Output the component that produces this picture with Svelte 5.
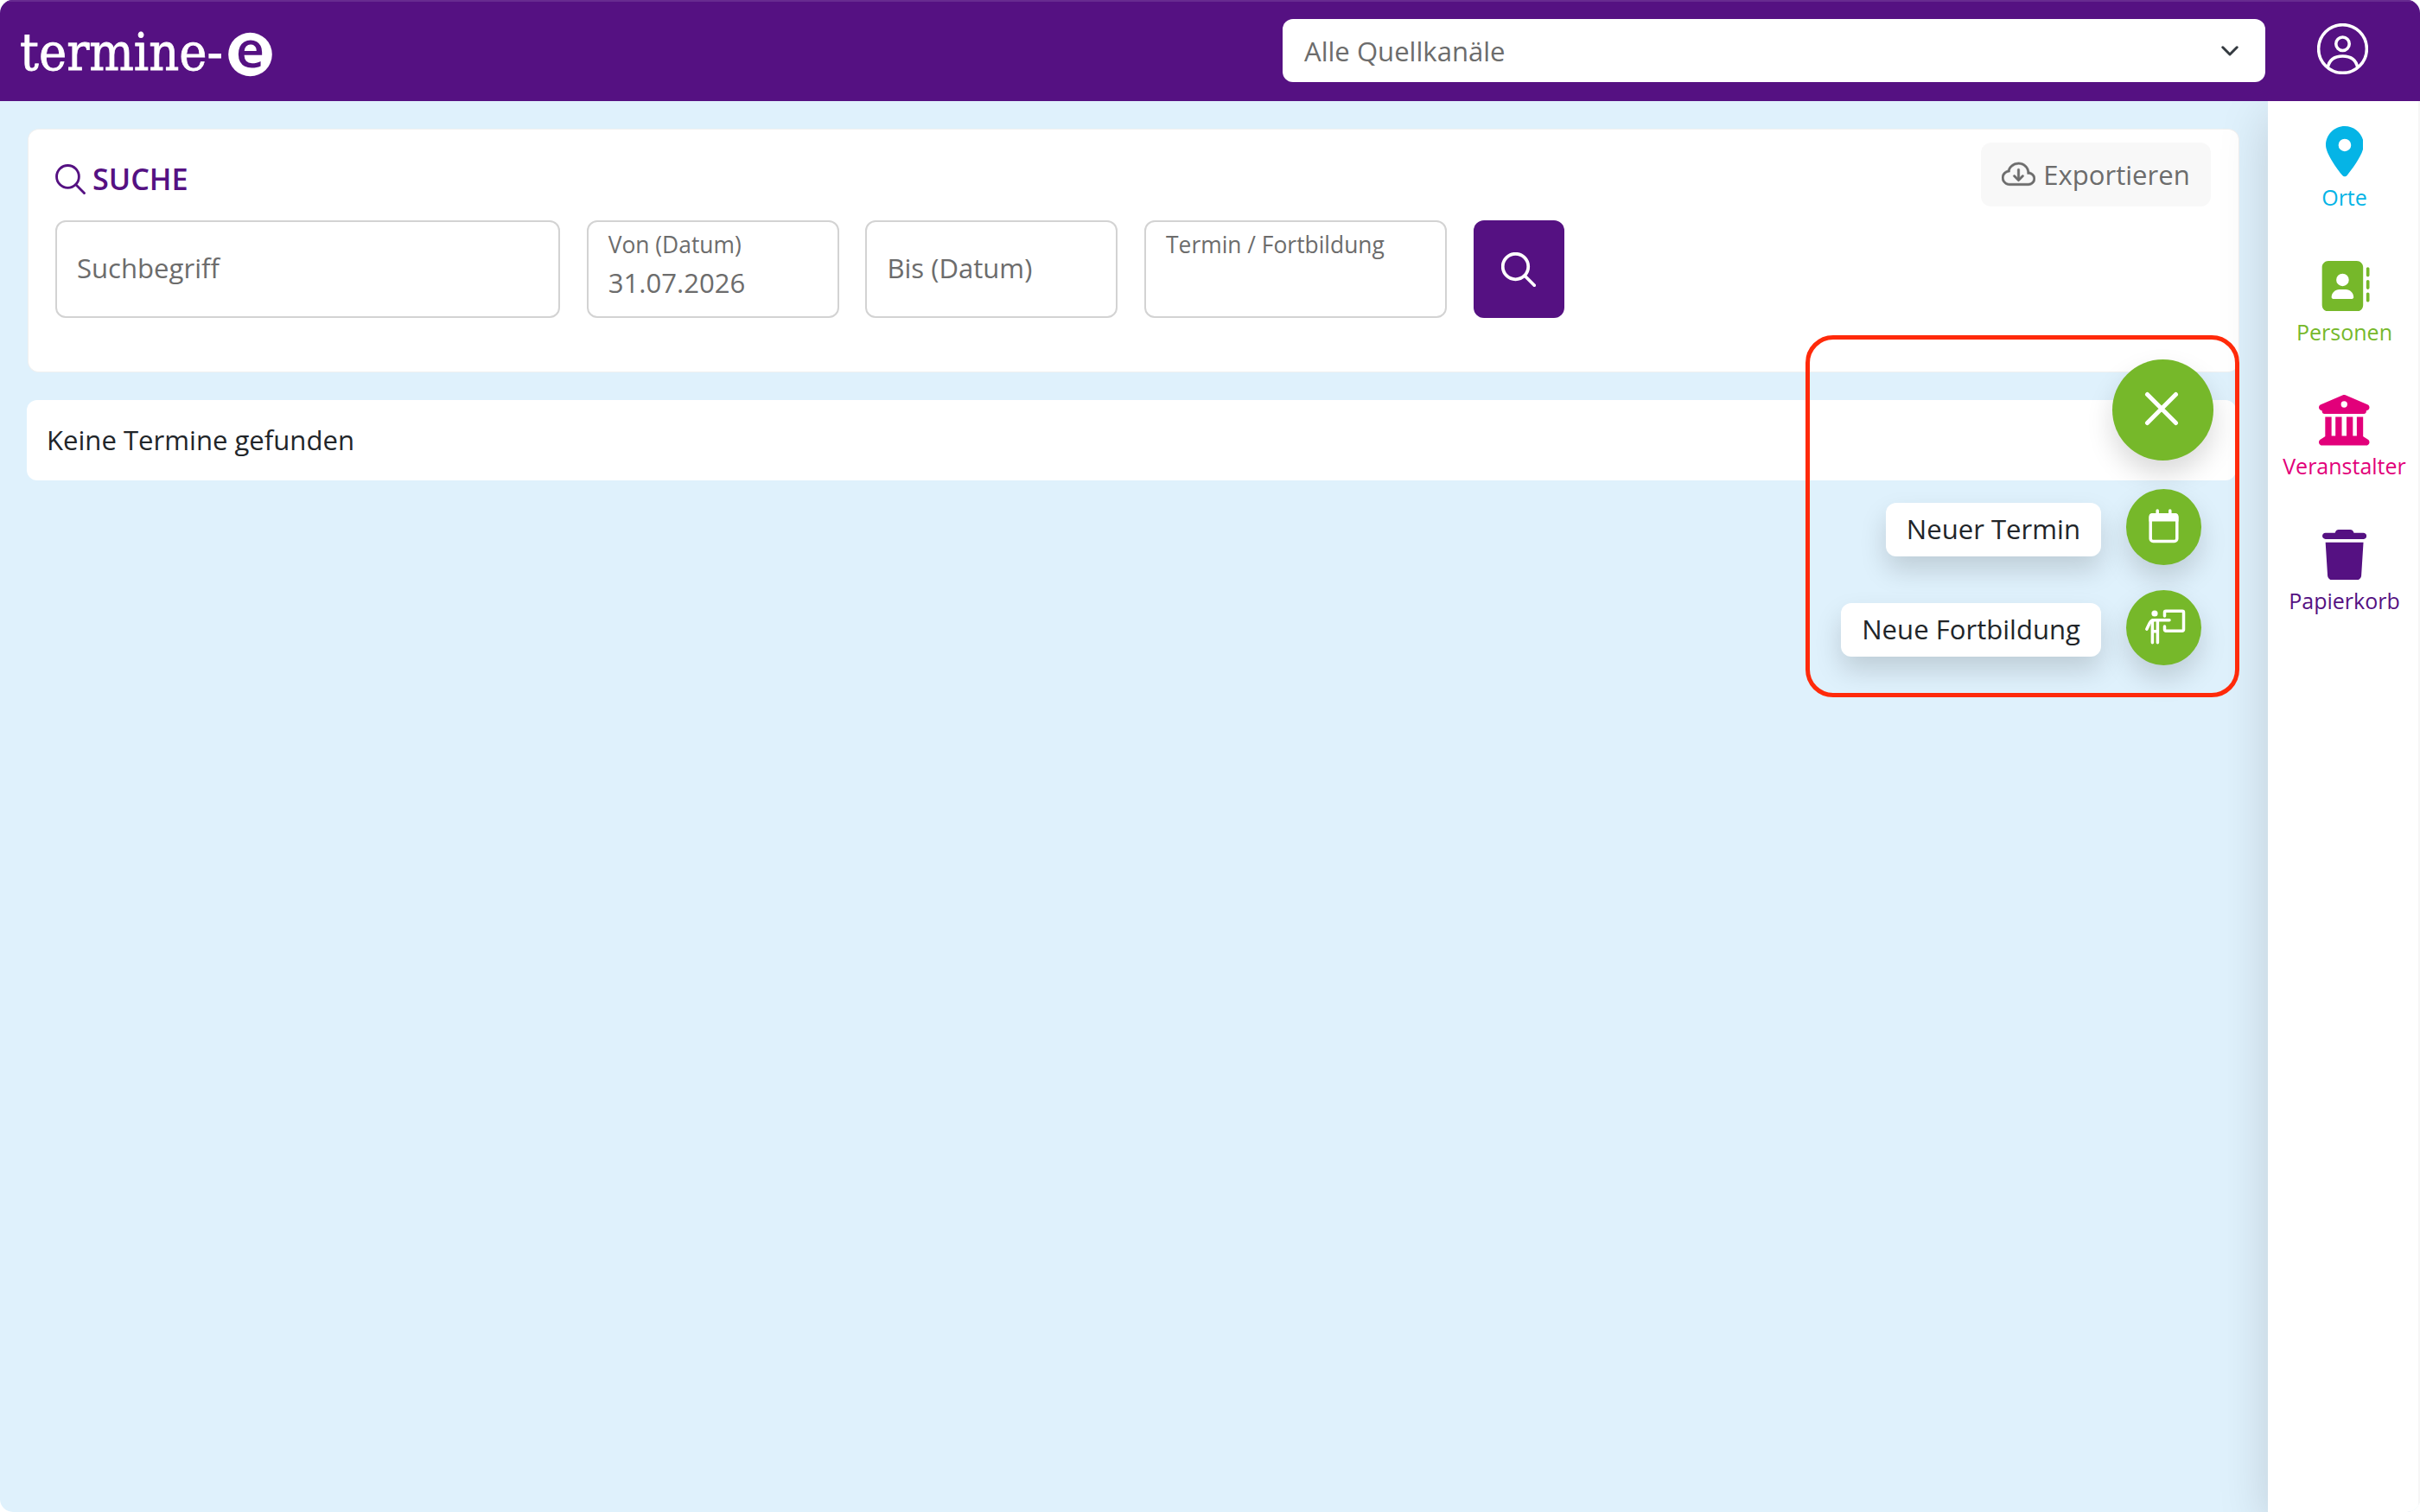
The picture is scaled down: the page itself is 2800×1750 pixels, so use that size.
<script>
	let navItems = [
		{ name: "Orte", cls: "orte", width: 384, path: "M215.7 499.2C267 435 384 279.4 384 192C384 86 298 0 192 0S0 86 0 192c0 87.4 117 243 168.3 307.2c12.3 15.3 35.1 15.3 47.4 0zM192 128a64 64 0 1 1 0 128 64 64 0 1 1 0-128z" },
		{ name: "Personen", cls: "personen", width: 512, path: "M96 0C60.7 0 32 28.7 32 64V448c0 35.3 28.7 64 64 64H384c35.3 0 64-28.7 64-64V64c0-35.3-28.7-64-64-64H96zM208 288h64c44.2 0 80 35.8 80 80c0 8.8-7.2 16-16 16H144c-8.8 0-16-7.2-16-16c0-44.2 35.8-80 80-80zm-32-96a64 64 0 1 1 128 0 64 64 0 1 1 -128 0zM512 80c0-8.8-7.2-16-16-16s-16 7.2-16 16v64c0 8.8 7.2 16 16 16s16-7.2 16-16V80zM496 192c-8.8 0-16 7.2-16 16v64c0 8.8 7.2 16 16 16s16-7.2 16-16V208c0-8.8-7.2-16-16-16zm16 144c0-8.8-7.2-16-16-16s-16 7.2-16 16v64c0 8.8 7.2 16 16 16s16-7.2 16-16V336z" },
		{ name: "Veranstalter", cls: "veranstalter", width: 512, path: "M243.4 2.6l-224 96c-14 6-21.8 21-18.7 35.8S16.8 160 32 160v8c0 13.3 10.7 24 24 24H456c13.3 0 24-10.7 24-24v-8c15.2 0 28.3-10.7 31.3-25.6s-4.8-29.9-18.7-35.8l-224-96c-8-3.4-17.2-3.4-25.2 0zM128 224H64V420.3c-.6 .3-1.2 .7-1.8 1.1l-48 32c-11.7 7.8-17 22.4-12.9 35.9S17.9 512 32 512H480c14.1 0 26.5-9.2 30.6-22.7s-1.1-28.1-12.9-35.9l-48-32c-.6-.4-1.2-.7-1.8-1.1V224H384V416H344V224H280V416H232V224H168V416H128V224zM256 64a32 32 0 1 1 0 64 32 32 0 1 1 0-64z" },
		{ name: "Papierkorb", cls: "papierkorb", width: 448, path: "M135.2 17.7L128 32H32C14.3 32 0 46.3 0 64S14.3 96 32 96H416c17.7 0 32-14.3 32-32s-14.3-32-32-32H320l-7.2-14.3C307.4 6.8 296.3 0 284.2 0H163.8c-12.1 0-23.2 6.8-28.6 17.7zM416 128H32L53.2 467c1.6 25.3 22.6 45 47.9 45H346.9c25.3 0 46.3-19.7 47.9-45L416 128z" }
	];

	let fields = [
		{ label: "Suchbegriff", value: "", floating: false, cls: "wide" },
		{ label: "Von (Datum)", value: "31.07.2026", floating: true, cls: "date" },
		{ label: "Bis (Datum)", value: "", floating: false, cls: "date" },
		{ label: "Termin / Fortbildung", value: "", floating: true, cls: "type" }
	];

	let menuOpen = true;

	function toggleMenu() {
		menuOpen = !menuOpen;
	}
</script>

<svelte:head>
	<title>termine-e</title>
</svelte:head>

{#snippet searchIcon()}
	<svg class="search-icon" viewBox="0 0 16 16">
		<circle cx="6.6" cy="6.6" r="5.9" />
		<path d="M10.9 10.900l4.400 4.400" />
	</svg>
{/snippet}

<div id="page">
	<header>
		<svg class="logo" viewBox="0 0 320 117">
			<text class="logo-text" x="23" y="81" textLength="235" lengthAdjust="spacingAndGlyphs">termine-</text>
			<circle cx="289.5" cy="63" r="25.3" fill="#fff" />
			<text class="logo-e" x="289.5" y="77.5" text-anchor="middle">e</text>
		</svg>

		<div class="header-right">
			<button class="channel">
				<span>Alle Quellkanäle</span>
				<svg class="chevron" viewBox="0 0 20 12"><path d="M1.8 1.8l8.2 8.2 8.2-8.2" /></svg>
			</button>
			<button class="user" aria-label="Benutzer">
				<svg viewBox="0 0 58 58">
					<circle cx="29" cy="29" r="27.4" />
					<circle cx="29" cy="23.3" r="7.6" />
					<path d="M12 50.5C13.5 42 19 37.3 29 37.3S44.5 42 46 50.5" />
				</svg>
			</button>
		</div>
	</header>

	<div id="body">
		<main>
			<section class="card search">
				<div class="search-head">
					<h2>{@render searchIcon()}SUCHE</h2>
					<button class="export">
						<svg viewBox="0 0 16 16" fill="currentColor">
							<path d="M7.646 10.854a.5.5 0 0 0 .708 0l2-2a.5.5 0 0 0-.708-.708L8.5 9.293V5.5a.5.5 0 0 0-1 0v3.793L6.354 8.146a.5.5 0 1 0-.708.708z" />
							<path d="M4.406 3.342A5.53 5.53 0 0 1 8 2c2.69 0 4.923 2 5.166 4.579C14.758 6.804 16 8.137 16 9.773 16 11.569 14.502 13 12.687 13H3.781C1.708 13 0 11.366 0 9.318c0-1.763 1.266-3.223 2.942-3.593.143-.863.698-1.723 1.464-2.383m.653.757c-.757.653-1.153 1.44-1.153 2.056v.448l-.445.049C2.064 6.805 1 7.952 1 9.318 1 10.785 2.23 12 3.781 12h8.906C13.98 12 15 10.988 15 9.773c0-1.216-1.02-2.228-2.313-2.228h-.5v-.5C12.188 4.825 10.328 3 8 3a4.53 4.53 0 0 0-2.941 1.1z" />
						</svg>
						Exportieren
					</button>
				</div>

				<div class="fields">
					{#each fields as field}
						<div class="field {field.cls}" class:floating={field.floating}>
							<div class="label">{field.label}</div>
							{#if field.value}
								<div class="value">{field.value}</div>
							{/if}
						</div>
					{/each}
					<button class="submit" aria-label="Suchen">{@render searchIcon()}</button>
				</div>
			</section>

			<section class="card result">Keine Termine gefunden</section>
		</main>

		<nav>
			{#each navItems as item}
				<div class="nav-item {item.cls}">
					<svg viewBox="0 0 {item.width} 512" fill="currentColor"><path d={item.path} /></svg>
					<span>{item.name}</span>
				</div>
			{/each}
		</nav>
	</div>

	<!-- floating action menu -->
	<div class="fab-menu">
		<button class="fab main-fab" aria-label="Menü" on:click={toggleMenu}>
			<svg viewBox="0 0 40 40"><path d="M3.5 3.5l33 33M36.5 3.5l-33 33" /></svg>
		</button>
		{#if menuOpen}
			<div class="fab-row">
				<span class="fab-label">Neuer Termin</span>
				<button class="fab small" aria-label="Neuer Termin">
					<svg viewBox="0 0 46 46">
						<rect x="8.2" y="8.7" width="30.6" height="30.8" rx="3" />
						<path class="solid" d="M6.5 11a4 4 0 0 1 4-4h26a4 4 0 0 1 4 4v5.500H6.500z" />
						<path d="M16.2 4v5M30.800 4v5" />
					</svg>
				</button>
			</div>
			<div class="fab-row">
				<span class="fab-label">Neue Fortbildung</span>
				<button class="fab small" aria-label="Neue Fortbildung">
					<svg viewBox="0 0 46 46">
						<circle class="solid" cx="13" cy="7" r="3.6" />
						<path d="M24.5 10V5.800a1.500 1.500 0 0 1 1.500-1.500h19a1.500 1.500 0 0 1 1.500 1.500v20a1.500 1.500 0 0 1-1.500 1.500H26a1.500 1.500 0 0 1-1.500-1.500V22" />
						<path d="M30 14.800H13.500c-4 0-5 .8-6.500 3.700l-3.200 6.700" />
						<path d="M10.400 15v25.800M16.400 15v25.800M10.400 27.800h6" />
					</svg>
				</button>
			</div>
		{/if}
	</div>

	<div class="highlight"></div>
</div>

<style>
	:global(body) {
		background: #fff;
	}

	#page {
		position: relative;
		display: flex;
		flex-direction: column;
		width: 2800px;
		height: 1750px;
		overflow: hidden;
		border-radius: 15px;
		background: #dff1fc;
		color: #212529;
		font-family: "Open Sans", "Noto Sans", sans-serif;
		font-size: 31.1px;
		line-height: 46px;
	}

	button {
		display: flex;
		align-items: center;
		justify-content: center;
		box-sizing: border-box;
		margin: 0;
		padding: 0;
		border: none;
		background: none;
		color: inherit;
		font: inherit;
	}

	header {
		display: flex;
		justify-content: space-between;
		flex: none;
		height: 117px;
		box-sizing: border-box;
		background: #551182;
		box-shadow: inset 0 2px #672b90;
		z-index: 1;
	}

	.logo {
		flex: none;
		width: 320px;
		height: 117px;
	}

	.logo-text {
		font-family: "DejaVu Serif", serif;
		font-size: 59px;
		fill: #fff;
		stroke: #fff;
		stroke-width: 0.8;
	}

	.logo-e {
		font-family: "Open Sans", sans-serif;
		font-size: 57px;
		font-weight: 600;
		fill: #551182;
	}

	.header-right {
		display: flex;
		align-items: flex-start;
		padding-right: 60px;
	}

	.channel {
		justify-content: space-between;
		width: 1137px;
		height: 73px;
		margin: 22px 60px 0 0;
		padding: 0 31px 0 25px;
		border-radius: 12px;
		background: #fff;
		color: #6c6c6c;
	}

	.chevron {
		width: 20px;
		height: 12px;
		fill: none;
		stroke: #343a40;
		stroke-width: 3;
		stroke-linecap: round;
		stroke-linejoin: round;
	}

	.user {
		margin-top: 27px;
	}

	.user svg {
		width: 59px;
		height: 59px;
		fill: none;
		stroke: #fff;
		stroke-width: 3.5;
	}

	#body {
		display: flex;
		flex: 1;
	}

	main {
		flex: 1;
		display: flex;
		flex-direction: column;
		gap: 33px;
		padding: 33px 34px 0 31px;
	}

	.card {
		box-sizing: border-box;
		border-radius: 12px;
		background: #fff;
	}

	.search {
		height: 280px;
		margin: 0 0 0 2px;
		padding: 15px 32px 0 31px;
		box-shadow: 0 0 0 1px #f0f0f0;
	}

	.search-head {
		display: flex;
		justify-content: space-between;
		height: 90px;
	}

	h2 {
		display: flex;
		align-items: center;
		gap: 8px;
		height: 48px;
		margin: 18px 0 0;
		font-size: 34.2px;
		font-weight: 600;
		color: #551182;
	}

	.search-icon {
		fill: none;
		stroke: currentColor;
		stroke-linecap: round;
	}

	h2 .search-icon {
		width: 35px;
		height: 35px;
		stroke-width: 1.3;
	}

	.export {
		gap: 9px;
		width: 266px;
		height: 74px;
		border-radius: 12px;
		background: #f8f8f8;
		color: #6c6c6c;
	}

	.export svg {
		width: 39px;
		height: 39px;
		stroke: currentColor;
		stroke-width: 0.2;
	}

	.fields {
		display: flex;
		gap: 30.7px;
		height: 113px;
	}

	.field {
		display: flex;
		flex-direction: column;
		justify-content: center;
		box-sizing: border-box;
		padding: 0 23px 3px;
		border: 2px solid #d3d3d3;
		border-radius: 12px;
		color: #6c6c6c;
	}

	.wide {
		width: 584px;
	}

	.date {
		width: 292px;
	}

	.type {
		width: 350px;
	}

	.floating {
		justify-content: flex-start;
		padding-top: 3px;
	}

	.floating .label {
		font-size: 26.4px;
		height: 46px;
	}

	.floating .value {
		line-height: 43px;
	}

	.submit {
		width: 105px;
		border-radius: 12px;
		background: #551182;
		color: #fff;
	}

	.submit .search-icon {
		width: 40px;
		height: 40px;
		stroke-width: 1.5;
	}

	.result {
		height: 93px;
		margin-right: 3px;
		padding: 23px;
	}

	nav {
		display: flex;
		flex-direction: column;
		flex: none;
		width: 176px;
		box-sizing: border-box;
		padding-top: 29px;
		background: #fff;
		box-shadow: 0 16px 58px rgba(0, 0, 0, 0.15), inset -2px 0 #f6f6f6;
	}

	.nav-item {
		display: flex;
		flex-direction: column;
		align-items: center;
		height: 155.6px;
		padding-left: 1px;
		font-size: 25px;
		line-height: 34px;
	}

	.nav-item svg {
		height: 58.5px;
		margin-bottom: 6.500px;
	}

	.orte {
		color: #05b4e6;
	}

	.personen {
		color: #76b82a;
	}

	.veranstalter {
		color: #e2007a;
	}

	.papierkorb {
		color: #551182;
	}

	.fab-menu {
		position: absolute;
		top: 416px;
		right: 239px;
		display: flex;
		flex-direction: column;
		align-items: flex-end;
		z-index: 2;
	}

	.fab {
		width: 117px;
		height: 117px;
		border-radius: 50%;
		background: #76b82a;
		box-shadow: 0 15.5px 31px rgba(0, 0, 0, 0.15);
	}

	.main-fab {
		margin-bottom: 33px;
		padding: 0 3px 3px 0;
	}

	.fab svg {
		width: 40px;
		height: 40px;
		fill: none;
		stroke: #fff;
		stroke-width: 5;
		stroke-linecap: round;
	}

	.fab.small {
		width: 87.5px;
		height: 87.5px;
	}

	.fab.small svg {
		width: 46px;
		height: 46px;
		overflow: visible;
		stroke-width: 3.5;
	}

	.fab.small .solid {
		fill: #fff;
		stroke: none;
	}

	.fab-row {
		display: flex;
		align-items: center;
		gap: 28.5px;
		height: 87.5px;
		margin: 0 14px 29px 0;
	}

	.fab-label {
		height: 62px;
		margin-top: 6px;
		padding: 0 24px;
		border-radius: 12px;
		background: #fff;
		line-height: 61px;
		box-shadow: 0 15.5px 31px rgba(0, 0, 0, 0.15);
	}

	/* red frame around the open menu */
	.highlight {
		position: absolute;
		top: 388px;
		left: 2089px;
		width: 502px;
		height: 419px;
		box-sizing: border-box;
		border: 5px solid #ff2a0a;
		border-radius: 32px;
		z-index: 3;
		pointer-events: none;
	}
</style>
